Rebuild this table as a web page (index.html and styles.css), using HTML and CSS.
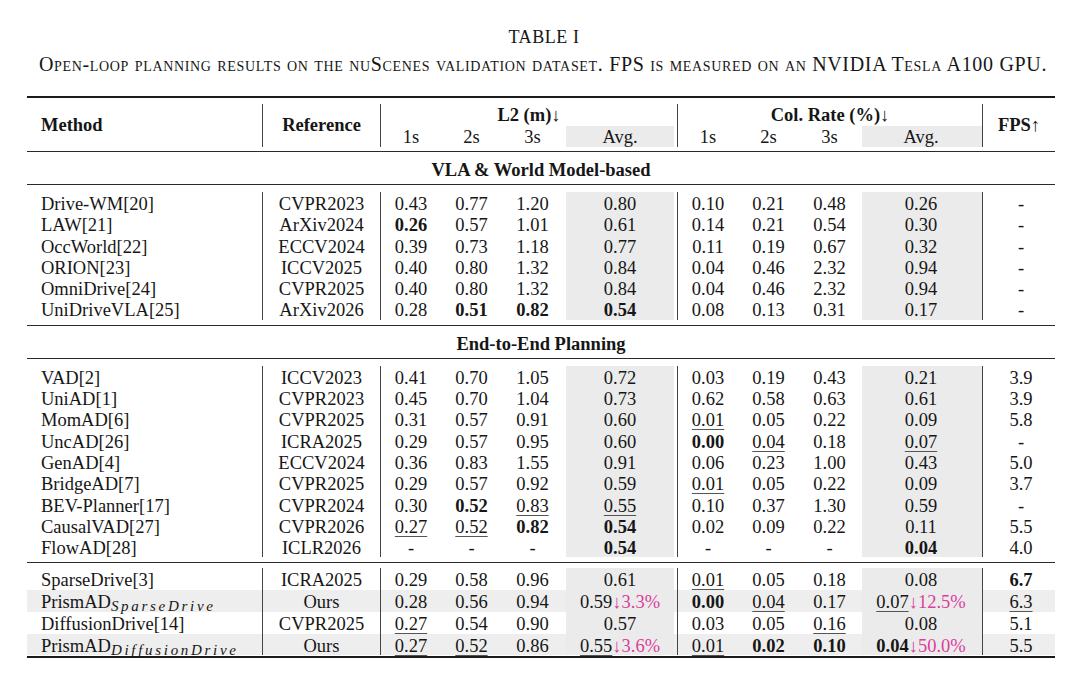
FILE: index.html
```html
<!DOCTYPE html>
<html>
<head>
<meta charset="utf-8">
<link rel="stylesheet" href="styles.css">
</head>
<body>
<div class="page">
  <div class="title">TABLE I</div>
  <div class="caption">Open-loop planning results on the nuScenes validation dataset. FPS is measured on an NVIDIA Tesla A100 GPU.</div>
  <div class="table">
    <div class="head">
      <div class="h-method">Method</div>
      <div class="h-ref vl">Reference</div>
      <div class="h-l2 vl">L2 (m)<span class="ar">↓</span></div>
      <div class="h-col vl">Col. Rate (%)<span class="ar">↓</span></div>
      <div class="h-fps vl">FPS<span class="ar">↑</span></div>
      <div class="sub vl s1">1s</div>
      <div class="sub">2s</div>
      <div class="sub">3s</div>
      <div class="sub avg-a">Avg.</div>
      <div class="sub vl">1s</div>
      <div class="sub">2s</div>
      <div class="sub">3s</div>
      <div class="sub avg-b">Avg.</div>
    </div>

    <div class="section">VLA &amp; World Model-based</div>

    <div class="block">
      <div class="row"><div class="m">Drive-WM[20]</div><div class="vl">CVPR2023</div><div class="vl">0.43</div><div>0.77</div><div>1.20</div><div class="avg-a">0.80</div><div class="vl">0.10</div><div>0.21</div><div>0.48</div><div class="avg-b">0.26</div><div class="vl f">-</div></div>
      <div class="row"><div class="m">LAW[21]</div><div class="vl">ArXiv2024</div><div class="vl"><b>0.26</b></div><div>0.57</div><div>1.01</div><div class="avg-a">0.61</div><div class="vl">0.14</div><div>0.21</div><div>0.54</div><div class="avg-b">0.30</div><div class="vl f">-</div></div>
      <div class="row"><div class="m">OccWorld[22]</div><div class="vl">ECCV2024</div><div class="vl">0.39</div><div>0.73</div><div>1.18</div><div class="avg-a">0.77</div><div class="vl">0.11</div><div>0.19</div><div>0.67</div><div class="avg-b">0.32</div><div class="vl f">-</div></div>
      <div class="row"><div class="m">ORION[23]</div><div class="vl">ICCV2025</div><div class="vl">0.40</div><div>0.80</div><div>1.32</div><div class="avg-a">0.84</div><div class="vl">0.04</div><div>0.46</div><div>2.32</div><div class="avg-b">0.94</div><div class="vl f">-</div></div>
      <div class="row"><div class="m">OmniDrive[24]</div><div class="vl">CVPR2025</div><div class="vl">0.40</div><div>0.80</div><div>1.32</div><div class="avg-a">0.84</div><div class="vl">0.04</div><div>0.46</div><div>2.32</div><div class="avg-b">0.94</div><div class="vl f">-</div></div>
      <div class="row"><div class="m">UniDriveVLA[25]</div><div class="vl">ArXiv2026</div><div class="vl">0.28</div><div><b>0.51</b></div><div><b>0.82</b></div><div class="avg-a"><b>0.54</b></div><div class="vl">0.08</div><div>0.13</div><div>0.31</div><div class="avg-b">0.17</div><div class="vl f">-</div></div>
    </div>

    <div class="section">End-to-End Planning</div>

    <div class="block">
      <div class="row"><div class="m">VAD[2]</div><div class="vl">ICCV2023</div><div class="vl">0.41</div><div>0.70</div><div>1.05</div><div class="avg-a">0.72</div><div class="vl">0.03</div><div>0.19</div><div>0.43</div><div class="avg-b">0.21</div><div class="vl f">3.9</div></div>
      <div class="row"><div class="m">UniAD[1]</div><div class="vl">CVPR2023</div><div class="vl">0.45</div><div>0.70</div><div>1.04</div><div class="avg-a">0.73</div><div class="vl">0.62</div><div>0.58</div><div>0.63</div><div class="avg-b">0.61</div><div class="vl f">3.9</div></div>
      <div class="row"><div class="m">MomAD[6]</div><div class="vl">CVPR2025</div><div class="vl">0.31</div><div>0.57</div><div>0.91</div><div class="avg-a">0.60</div><div class="vl"><u>0.01</u></div><div>0.05</div><div>0.22</div><div class="avg-b">0.09</div><div class="vl f">5.8</div></div>
      <div class="row"><div class="m">UncAD[26]</div><div class="vl">ICRA2025</div><div class="vl">0.29</div><div>0.57</div><div>0.95</div><div class="avg-a">0.60</div><div class="vl"><b>0.00</b></div><div><u>0.04</u></div><div>0.18</div><div class="avg-b"><u>0.07</u></div><div class="vl f">-</div></div>
      <div class="row"><div class="m">GenAD[4]</div><div class="vl">ECCV2024</div><div class="vl">0.36</div><div>0.83</div><div>1.55</div><div class="avg-a">0.91</div><div class="vl">0.06</div><div>0.23</div><div>1.00</div><div class="avg-b">0.43</div><div class="vl f">5.0</div></div>
      <div class="row"><div class="m">BridgeAD[7]</div><div class="vl">CVPR2025</div><div class="vl">0.29</div><div>0.57</div><div>0.92</div><div class="avg-a">0.59</div><div class="vl"><u>0.01</u></div><div>0.05</div><div>0.22</div><div class="avg-b">0.09</div><div class="vl f">3.7</div></div>
      <div class="row"><div class="m">BEV-Planner[17]</div><div class="vl">CVPR2024</div><div class="vl">0.30</div><div><b>0.52</b></div><div><u>0.83</u></div><div class="avg-a"><u>0.55</u></div><div class="vl">0.10</div><div>0.37</div><div>1.30</div><div class="avg-b">0.59</div><div class="vl f">-</div></div>
      <div class="row"><div class="m">CausalVAD[27]</div><div class="vl">CVPR2026</div><div class="vl"><u>0.27</u></div><div><u>0.52</u></div><div><b>0.82</b></div><div class="avg-a"><b>0.54</b></div><div class="vl">0.02</div><div>0.09</div><div>0.22</div><div class="avg-b">0.11</div><div class="vl f">5.5</div></div>
      <div class="row"><div class="m">FlowAD[28]</div><div class="vl">ICLR2026</div><div class="vl">-</div><div>-</div><div>-</div><div class="avg-a"><b>0.54</b></div><div class="vl">-</div><div>-</div><div>-</div><div class="avg-b"><b>0.04</b></div><div class="vl f">4.0</div></div>
    </div>

    <div class="block last">
      <div class="row"><div class="m">SparseDrive[3]</div><div class="vl">ICRA2025</div><div class="vl">0.29</div><div>0.58</div><div>0.96</div><div class="avg-a">0.61</div><div class="vl"><u>0.01</u></div><div>0.05</div><div>0.18</div><div class="avg-b">0.08</div><div class="vl f"><b>6.7</b></div></div>
      <div class="row hl"><div class="m">PrismAD<span class="subm">SparseDrive</span></div><div class="vl">Ours</div><div class="vl">0.28</div><div>0.56</div><div>0.94</div><div class="avg-a">0.59<span class="pk">↓3.3%</span></div><div class="vl"><b>0.00</b></div><div><u>0.04</u></div><div>0.17</div><div class="avg-b"><u>0.07</u><span class="pk">↓12.5%</span></div><div class="vl f"><u>6.3</u></div></div>
      <div class="row"><div class="m">DiffusionDrive[14]</div><div class="vl">CVPR2025</div><div class="vl"><u>0.27</u></div><div>0.54</div><div>0.90</div><div class="avg-a">0.57</div><div class="vl">0.03</div><div>0.05</div><div><u>0.16</u></div><div class="avg-b">0.08</div><div class="vl f">5.1</div></div>
      <div class="row hl"><div class="m">PrismAD<span class="subm">DiffusionDrive</span></div><div class="vl">Ours</div><div class="vl"><u>0.27</u></div><div><u>0.52</u></div><div>0.86</div><div class="avg-a"><u>0.55</u><span class="pk">↓3.6%</span></div><div class="vl"><u>0.01</u></div><div><b>0.02</b></div><div><b>0.10</b></div><div class="avg-b"><b>0.04</b><span class="pk">↓50.0%</span></div><div class="vl f">5.5</div></div>
    </div>
  </div>
</div>
</body>
</html>
```

FILE: styles.css
```css
html, body {
  margin: 0;
  padding: 0;
  background: #ffffff;
}

body {
  font-family: "Liberation Serif", "Times New Roman", serif;
  color: #161616;
}

.page {
  width: 1080px;
  height: 680px;
  padding-top: 26px;
  box-sizing: border-box;
}

.title {
  text-align: center;
  font-size: 18px;
  line-height: 22px;
  letter-spacing: 0.6px;
  padding-left: 8px;
}

.caption {
  margin-top: 5px;
  text-align: center;
  font-size: 20px;
  line-height: 22px;
  font-variant: small-caps;
  letter-spacing: 0.67px;
  padding-left: 6px;
}

.table {
  margin: 21px 0 0 27px;
  width: 1028px;
  border-top: 2px solid #1a1a1a;
  border-bottom: 2.5px solid #1a1a1a;
  font-size: 18.5px;
}

.head,
.row {
  display: grid;
  grid-template-columns: 235px 118px 61px 61px 61px 114px 61px 61px 61px 122px 73px;
}

.head {
  grid-template-rows: 22px 21px;
  padding: 6px 0 4px;
  border-bottom: 1px solid #2a2a2a;
  line-height: 23px;
  text-align: center;
}

.h-method {
  grid-column: 1;
  grid-row: 1 / 3;
  text-align: left;
  padding-left: 14px;
  font-weight: bold;
  align-self: center;
}

.h-ref {
  grid-column: 2;
  grid-row: 1 / 3;
  font-weight: bold;
  display: flex;
  align-items: center;
  justify-content: center;
}

.h-l2 {
  grid-column: 3 / 7;
  grid-row: 1;
  font-weight: bold;
  line-height: 23px;
}

.h-col {
  grid-column: 7 / 11;
  grid-row: 1;
  font-weight: bold;
  line-height: 23px;
}

.h-fps {
  grid-column: 11;
  grid-row: 1 / 3;
  font-weight: bold;
  display: flex;
  align-items: center;
  justify-content: center;
}

.ar {
  font-weight: normal;
}

.sub {
  grid-row: 2;
}

.vl {
  border-left: 1px solid #444444;
}

.avg-a {
  background: linear-gradient(to right, transparent 3px, #ebebeb 3px, #ebebeb calc(100% - 3px), transparent calc(100% - 3px));
}

.avg-b {
  background: linear-gradient(to right, transparent 2px, #ebebeb 2px);
}

.section {
  height: 32px;
  line-height: 36px;
  text-align: center;
  font-weight: bold;
  border-bottom: 1px solid #2a2a2a;
}

.block {
  padding: 7px 0 5px;
  border-bottom: 1px solid #2a2a2a;
}

.block.last {
  padding: 5px 0 1px;
  border-bottom: none;
}

.row {
  grid-template-rows: 21.3px;
  height: 21.3px;
  line-height: 25.3px;
  text-align: center;
  white-space: nowrap;
}

.block.last .row {
  grid-template-rows: 21.7px;
  height: 21.7px;
  line-height: 25.7px;
}

.row .m {
  text-align: left;
  padding-left: 14px;
}

.row.hl {
  background: #eeeeee;
}

.row .f {
  padding-left: 4px;
}

b {
  font-weight: bold;
}

u {
  position: relative;
  text-decoration: underline;
  text-decoration-thickness: 1px;
  text-underline-offset: 3px;
  text-decoration-color: #555555;
}

.pk {
  color: #dc3d9e;
}

.subm {
  font-style: italic;
  font-size: 15px;
  letter-spacing: 2.7px;
  line-height: 10px;
  position: relative;
  top: 3px;
}
```
